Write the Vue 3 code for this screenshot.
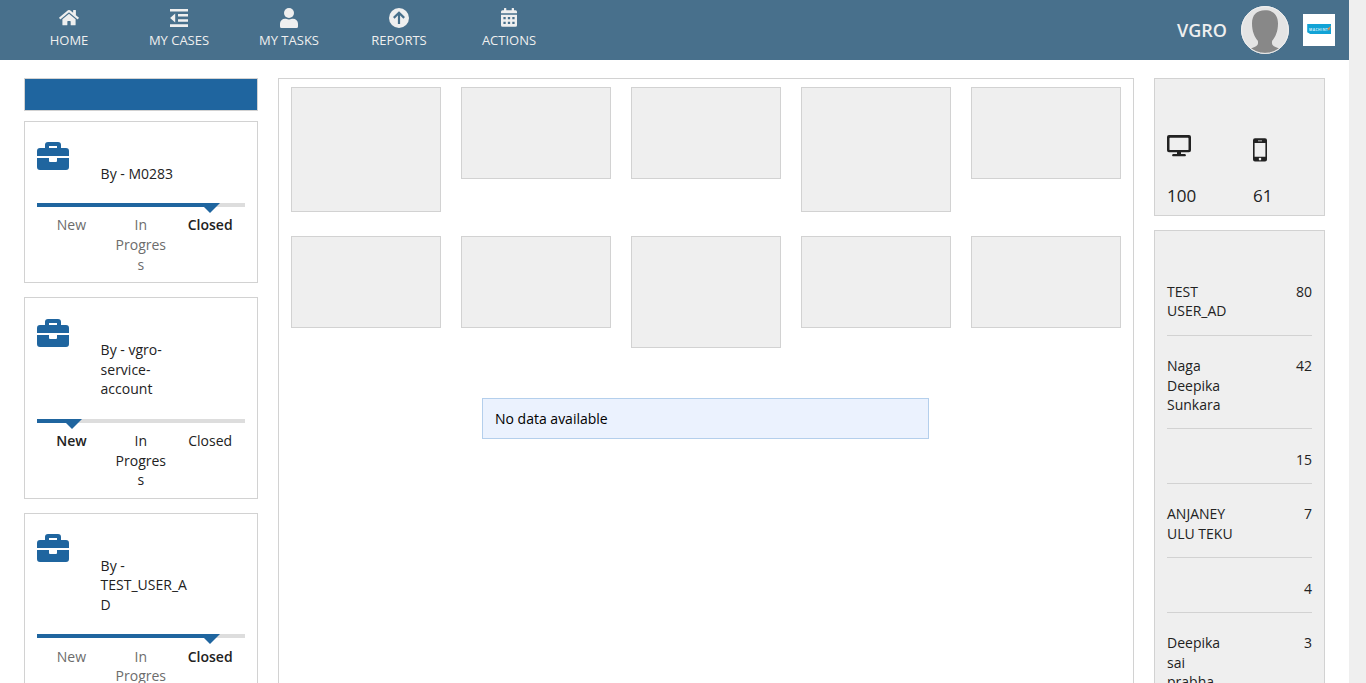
<script setup>
const nav = [
  { label: 'HOME', icon: 'home' },
  { label: 'MY CASES', icon: 'cases' },
  { label: 'MY TASKS', icon: 'user' },
  { label: 'REPORTS', icon: 'reports' },
  { label: 'ACTIONS', icon: 'calendar' },
]
const stages = ['New', 'In Progress', 'Closed']
const cases = [
  { by: 'M0283', stage: 2, muted: true },
  { by: 'vgro-service-account', stage: 0, muted: false },
  { by: 'TEST_USER_AD', stage: 2, muted: true },
]
const tileRows = [
  ['tall', 'short', 'short', 'tall', 'short'],
  ['short', 'short', 'mid', 'short', 'short'],
]
const users = [
  { name: 'TEST USER_AD', count: 80 },
  { name: 'Naga Deepika Sunkara', count: 42 },
  { name: '', count: 15 },
  { name: 'ANJANEYULU TEKU', count: 7 },
  { name: '', count: 4 },
  { name: 'Deepika sai prabha', count: 3 },
]
const position = (stage) => `${((stage + 0.5) / 3) * 100}%`
</script>

<template>
  <div class="app">
    <div class="page">
      <header class="topbar">
        <nav class="nav">
          <a v-for="item in nav" :key="item.label" class="nav-item">
            <svg v-if="item.icon === 'home'" class="nav-icon" viewBox="-32 -20 640 640" >
              <g transform="translate(0 34)">
                <path d="M280.37 148.26L96 300.11V464a16 16 0 0 0 16 16l112.06-.29a16 16 0 0 0 15.92-16V368a16 16 0 0 1 16-16h64a16 16 0 0 1 16 16v95.64a16 16 0 0 0 16 16.05L464 480a16 16 0 0 0 16-16V300L295.67 148.26a12.19 12.19 0 0 0-15.3 0zM571.6 251.47L488 182.56V44.05a12 12 0 0 0-12-12h-56a12 12 0 0 0-12 12v72.61L318.47 43a48 48 0 0 0-61 0L4.34 251.47a12 12 0 0 0-1.6 16.9l25.5 31A12 12 0 0 0 45.15 301l235.22-193.74a12.19 12.19 0 0 1 15.3 0L530.9 301a12 12 0 0 0 16.9-1.6l25.5-31a12 12 0 0 0-1.7-16.93z" />
              </g>
            </svg>
            <svg v-else-if="item.icon === 'cases'" class="nav-icon" viewBox="0 0 22 22">
              <path d="M2 2h18v2.5H2zM10 7h10v2.5H10zM10 12.2h10v2.5H10zM2 17.3h18v2.6H2zM7.2 6.6v8.8L2.1 11z" />
            </svg>
            <svg v-else-if="item.icon === 'user'" class="nav-icon" viewBox="0 0 22 22">
              <circle cx="11" cy="6" r="5" />
              <path d="M2 21v-4.200a5 5 0 0 1 5-5c1.500 0 2 .7 4 .7s2.500-.7 4-.7a5 5 0 0 1 5 5V19.500a1.500 1.500 0 0 1-1.500 1.500h-15A1.500 1.500 0 0 1 2 19.500z" />
            </svg>
            <svg v-else-if="item.icon === 'reports'" class="nav-icon" viewBox="0 0 22 22">
              <circle cx="11" cy="11" r="10" />
              <path class="cut" d="M11 17V6M5.800 10.900L11 5.700l5.200 5.200" />
            </svg>
            <svg v-else class="nav-icon" viewBox="0 0 22 22">
              <path fill-rule="evenodd" d="M3 6.200V4.700a1.500 1.500 0 0 1 1.500-1.500H6V1.500A.5.5 0 0 1 6.500 1h1.300a.5.5 0 0 1 .5.5v1.700h5.400V1.500a.5.5 0 0 1 .5-.5h1.300a.5.5 0 0 1 .5.5v1.700h1.500A1.500 1.500 0 0 1 19 4.700v1.500zM3 7.700h16v10.500a1.500 1.500 0 0 1-1.500 1.500h-13A1.500 1.500 0 0 1 3 18.200zM5.400 10v2.200h2.300V10zM9.850 10v2.200h2.300V10zM14.300 10v2.200h2.300V10zM5.400 14.700v2.200h2.300v-2.200zM9.850 14.700v2.200h2.300v-2.200zM14.300 14.700v2.200h2.300v-2.200z" />
            </svg>
            <span>{{ item.label }}</span>
          </a>
        </nav>
        <div class="account">
          <span class="site-name">VGRO</span>
          <svg class="avatar" viewBox="0 0 48 48">
            <defs>
              <clipPath id="avatar-clip"><circle cx="24" cy="24" r="23.500" /></clipPath>
            </defs>
            <circle cx="24" cy="24" r="23.500" fill="#e4e4e4" stroke="#f0f0f0" />
            <g clip-path="url(#avatar-clip)">
              <path fill="#888" d="M24 4.200C15.500 4.200 11 9 11 17.500c0 8 2.500 13.200 5.800 17.300.8 3.200-.3 5-3.300 6.100L7.500 43.500V48h33v-4.500l-6-2.600c-3-1.100-4.100-2.900-3.300-6.100C34.500 30.700 37 25.500 37 17.500 37 9 32.500 4.200 24 4.200z" />
            </g>
            <circle cx="24" cy="24" r="23.400" fill="none" stroke="#eee" />
          </svg>
          <svg class="logo" viewBox="0 0 32 32">
            <rect width="32" height="32" fill="#fff" />
            <path fill="#12a3d6" d="M4.200 10H28v10H7.200l-3-1.800z" />
            <path fill="#d98b4a" d="M28 11.800l-3.600 3 1.600 2z" />
            <text x="6" y="17" class="logo-text">MACHINT</text>
          </svg>
        </div>
      </header>

      <main class="columns">
        <aside class="left">
          <div class="banner"></div>
          <section v-for="item in cases" :key="item.by" class="case">
            <div class="case-head">
              <svg class="briefcase" viewBox="0 0 32 28">
                <path fill-rule="evenodd" d="M8 6V3a3 3 0 0 1 3-3h10a3 3 0 0 1 3 3v3h5a3 3 0 0 1 3 3v5H0V9a3 3 0 0 1 3-3zM12 4v2h8V4zM0 16h12v3a1 1 0 0 0 1 1h6a1 1 0 0 0 1-1v-3h12v9a3 3 0 0 1-3 3H3a3 3 0 0 1-3-3z" />
              </svg>
              <p class="by">By - {{ item.by }}</p>
            </div>
            <div class="track">
              <div class="fill" :style="{ width: position(item.stage) }"></div>
              <div class="arrow" :style="{ left: position(item.stage) }"></div>
            </div>
            <div class="stages" :class="{ muted: item.muted }">
              <span v-for="(stage, i) in stages" :key="stage" :class="{ current: i === item.stage }">{{ stage }}</span>
            </div>
          </section>
        </aside>

        <section class="center">
          <div v-for="(row, r) in tileRows" :key="r" class="tiles">
            <div v-for="(size, c) in row" :key="c" class="tile" :class="size"></div>
          </div>
          <div class="notice">No data available</div>
        </section>

        <aside class="right">
          <section class="devices">
            <div class="device">
              <svg class="device-icon" viewBox="0 0 24 28">
                <path fill-rule="evenodd" d="M2 2.100h20a2 2 0 0 1 2 2v13.200a2 2 0 0 1-2 2h-8v1.800h3.200a1 1 0 0 1 1 2.200H5.800a1 1 0 0 1 1-2.200H10v-1.800H2a2 2 0 0 1-2-2V4.100a2 2 0 0 1 2-2zM3.100 4.800a.6.6 0 0 0-.6.6v11a.6.6 0 0 0 .6.6h17.800a.6.6 0 0 0 .6-.6v-11a.6.6 0 0 0-.6-.6z" />
              </svg>
              <span>100</span>
            </div>
            <div class="device">
              <svg class="device-icon" viewBox="0 0 24 28">
                <path fill-rule="evenodd" d="M2 5.200h10a2 2 0 0 1 2 2v19.400a2 2 0 0 1-2 2H2a2 2 0 0 1-2-2V7.200a2 2 0 0 1 2-2zM1.600 10v13.700h10.800V10zM5 7.400v.8h4v-.8zM7 24.800a1.300 1.300 0 1 0 0 2.600 1.300 1.300 0 0 0 0-2.600z" />
              </svg>
              <span>61</span>
            </div>
          </section>
          <section class="users">
            <div v-for="(user, i) in users" :key="i" class="user">
              <span class="user-name">{{ user.name }}</span>
              <span>{{ user.count }}</span>
            </div>
          </section>
        </aside>
      </main>
    </div>
  </div>
</template>

<style>
html,
body {
  overflow: hidden;
}
</style>

<style scoped>
.app {
  height: 683px;
  overflow: hidden;
  background: #efefef;
  color: #222;
  font: 14px/19.6px 'Open Sans', 'Noto Sans', sans-serif;
}
.app * {
  box-sizing: border-box;
}
.page {
  width: 1349px;
  height: 683px;
  background: #fff;
}
.topbar {
  display: flex;
  justify-content: space-between;
  height: 60px;
  padding: 0 14px;
  background: #48708c;
  color: #efefef;
}
.nav {
  display: flex;
}
.nav-item {
  display: flex;
  flex-direction: column;
  align-items: center;
  width: 110px;
  padding-top: 7px;
  font-size: 13px;
  line-height: 18px;
}
.nav-icon {
  width: 22px;
  height: 22px;
  margin-bottom: 2px;
  fill: #efefef;
}
.cut {
  fill: none;
  stroke: #48708c;
  stroke-width: 2.2;
}
.account {
  display: flex;
  align-items: center;
  gap: 14px;
}
.site-name {
  padding-top: 2px;
  font-size: 18px;
  font-weight: 600;
}
.avatar {
  width: 48px;
  height: 48px;
}
.logo {
  width: 32px;
  height: 32px;
}
.logo-text {
  font: bold 3.4px 'Open Sans', sans-serif;
  letter-spacing: 0.45px;
  fill: #d4eef7;
}
.columns {
  display: grid;
  grid-template-columns: 234px 856px 171px;
  column-gap: 20px;
  height: 623px;
  padding: 18px 24px 0;
}
.banner {
  height: 33px;
  margin-bottom: 10px;
  border: 1px solid #d2d2d2;
  background: #1f659f;
}
.case {
  margin-bottom: 14px;
  padding: 20.200px 12px 8.100px;
  border: 1px solid #d2d2d2;
}
.case-head {
  display: flex;
  gap: 31.600px;
  padding-bottom: 19.750px;
}
.briefcase {
  flex: none;
  width: 32px;
  height: 28px;
  fill: #1f659f;
}
.by {
  width: 92px;
  margin: 21.600px 0 0;
  overflow-wrap: anywhere;
}
.track {
  position: relative;
  height: 4px;
  background: #ddd;
}
.fill {
  height: 4px;
  background: #1f659f;
}
.arrow {
  position: absolute;
  top: 0;
  margin-left: -10px;
  border: 10px solid transparent;
  border-top-color: #1f659f;
  border-bottom: 0;
}
.stages {
  display: grid;
  grid-template-columns: repeat(3, 1fr);
  padding-top: 8.350px;
  text-align: center;
}
.stages span {
  padding: 0 8.200px 0 7.800px;
  overflow-wrap: anywhere;
}
.stages.muted span {
  color: #6c6c6c;
}
.stages .current,
.stages.muted .current {
  padding: 0 0.4px 0 0;
  color: #222;
  font-weight: 600;
}
.center {
  border: 1px solid #d2d2d2;
  border-bottom: 0;
  padding: 8px 12px 0;
}
.tiles {
  display: flex;
  align-items: flex-start;
  gap: 20px;
  height: 149px;
}
.tile {
  width: 150px;
  border: 1px solid #d2d2d2;
  background: #efefef;
}
.tall {
  height: 125px;
}
.mid {
  height: 112px;
}
.short {
  height: 92px;
}
.notice {
  width: 447px;
  margin: 13px 0 0 191px;
  padding: 9.700px 12px;
  border: 1px solid #b4cfec;
  background: #ebf2fe;
  color: #000;
}
.devices {
  display: flex;
  height: 138px;
  margin-bottom: 14px;
  padding: 54px 12px 0;
  border: 1px solid #d2d2d2;
  background: #efefef;
}
.device {
  display: flex;
  flex-direction: column;
  width: 86px;
  flex: none;
  font-size: 17px;
  line-height: 24px;
}
.device:last-child {
  width: 59px;
}
.device-icon {
  overflow: visible;
  width: 24px;
  height: 28px;
  margin-bottom: 23px;
  fill: #222;
}
.users {
  padding: 50.850px 12px 0;
  height: 460px;
  border: 1px solid #d2d2d2;
  background: #efefef;
}
.user {
  display: flex;
  justify-content: space-between;
  min-height: 33.200px;
  margin-bottom: 20.500px;
  padding-bottom: 13.500px;
  border-bottom: 1px solid #d2d2d2;
}
.user-name {
  width: 68px;
  overflow-wrap: anywhere;
}
</style>
